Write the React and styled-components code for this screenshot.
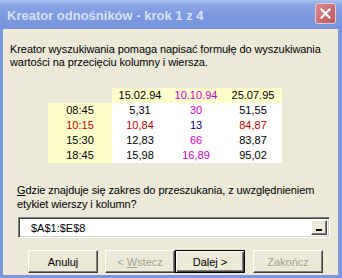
import React from 'react'
import styled, { createGlobalStyle } from 'styled-components'

const GlobalStyle = createGlobalStyle`
    html, body {
        margin: 0;
        padding: 0;
        background: #ece9d8;
    }
    body {
        font-family: "Liberation Sans", Arial, sans-serif;
        font-size: 11px;
    }
`

const rows = [
    { label: '08:45', color: '#000', cells: [['5,31'], ['30', '#cc00cc'], ['51,55']] },
    { label: '10:15', color: '#c00000', cells: [['10,84', '#c00000'], ['13', '#000080'], ['84,87', '#c00000']] },
    { label: '15:30', color: '#000', cells: [['12,83'], ['66', '#cc00cc'], ['83,87']] },
    { label: '18:45', color: '#000', cells: [['15,98'], ['16,89', '#cc00cc'], ['95,02']] },
]

const headers = [['15.02.94'], ['10.10.94', '#cc00cc'], ['25.07.95']]

export default function App() {
    return (
        <Window>
            <GlobalStyle />
            <TitleBar>
                <Title>Kreator odnośników - krok 1 z 4</Title>
                <CloseButton>
                    <svg width="11" height="11" viewBox="0 0 11 11">
                        <path d="M1.5 1.5 L9.5 9.5 M9.5 1.5 L1.5 9.5" stroke="#fff" strokeWidth="2.2" strokeLinecap="square" />
                    </svg>
                </CloseButton>
            </TitleBar>
            <Body>
                <Intro>
                    Kreator wyszukiwania pomaga napisać formułę do wyszukiwania wartości na przecięciu kolumny i wiersza.
                </Intro>
                <Sheet>
                    <Cell $bg="transparent" />
                    {headers.map(([text, color]) => (
                        <Cell key={text} $bg="#ffffcc" $color={color}>{text}</Cell>
                    ))}
                    {rows.map(row => (
                        <React.Fragment key={row.label}>
                            <Cell $bg="#ffffcc" $color={row.color}>{row.label}</Cell>
                            {row.cells.map(([text, color], i) => (
                                <Cell key={i} $bg="#fff" $color={color}>{text}</Cell>
                            ))}
                        </React.Fragment>
                    ))}
                </Sheet>
                <Question>
                    Gdzie znajduje się zakres do przeszukania, z uwzględnieniem etykiet wierszy i kolumn?
                </Question>
                <RangeField>
                    <RangeText>$A$1:$E$8</RangeText>
                    <CollapseButton>
                        <Dash />
                    </CollapseButton>
                </RangeField>
                <ButtonRow>
                    <Button>Anuluj</Button>
                    <Button disabled $ml={7}>&lt;&nbsp;<Key>W</Key>stecz</Button>
                    <Button $default>Dalej &gt;</Button>
                    <Button disabled $ml={8}>Zakończ</Button>
                </ButtonRow>
            </Body>
        </Window>
    )
}

const Window = styled.div`
    width: 342px;
    height: 278px;
    display: flex;
    flex-direction: column;
    background: #7b97de;
    overflow: hidden;
`

const TitleBar = styled.div`
    height: 29px;
    flex: none;
    display: flex;
    align-items: center;
    justify-content: space-between;
    padding: 0 6px 0 7px;
    box-sizing: border-box;
    background: linear-gradient(to bottom, #a9c0f0 0%, #8ba6e6 18%, #7d99df 50%, #7894dc 100%);
`

const Title = styled.div`
    font-family: "Liberation Sans", sans-serif;
    font-weight: bold;
    font-size: 13px;
    color: #d8e2f8;
    padding-top: 1px;
`

const CloseButton = styled.div`
    width: 19px;
    height: 19px;
    border: 1px solid #e9c9cb;
    border-radius: 3px;
    background: linear-gradient(135deg, #d98d91 0%, #c56a6f 60%, #b85b60 100%);
    display: flex;
    align-items: center;
    justify-content: center;
    margin-bottom: 2px;
`

const Body = styled.div`
    flex: 1;
    margin: 0 4px 3px 3px;
    background: #ece9d8;
    padding: 14px 7px 0 7px;
    display: flex;
    flex-direction: column;
    align-items: flex-start;
    color: #000;
`

const Intro = styled.p`
    margin: 0;
    line-height: 13px;
    width: 322px;
    letter-spacing: -0.08px;
`

const Sheet = styled.div`
    display: grid;
    grid-template-columns: 64px 56px 56px 58px;
    grid-auto-rows: 15px;
    margin: 19px 0 0 38px;
`

const Cell = styled.div`
    background: ${p => p.$bg};
    color: ${p => p.$color || '#000'};
    text-align: center;
    line-height: 15px;
`

const Question = styled.p`
    margin: 20px 0 0 7px;
    line-height: 14px;
    width: 310px;
    letter-spacing: -0.08px;

    &::first-letter {
        text-decoration: underline;
    }
`

const RangeField = styled.div`
    margin: 6px 0 0 8px;
    width: 312px;
    height: 21px;
    box-sizing: border-box;
    background: #fff;
    border: 1px solid;
    border-color: #808080 #fff #fff #808080;
    box-shadow: inset 1px 1px 0 #404040, inset -1px -1px 0 #d4d0c8;
    display: flex;
    align-items: center;
    justify-content: space-between;
    padding: 0 2px 0 12px;
`

const RangeText = styled.span`
    padding-top: 1px;
`

const CollapseButton = styled.div`
    width: 16px;
    height: 15px;
    box-sizing: border-box;
    background: #ece9d8;
    border: 1px solid;
    border-color: #fff #404040 #404040 #fff;
    box-shadow: inset -1px -1px 0 #808080;
    display: flex;
    align-items: flex-end;
    justify-content: center;
    padding-bottom: 3px;
`

const Dash = styled.div`
    width: 6px;
    height: 2px;
    background: #000;
`

const ButtonRow = styled.div`
    display: flex;
    margin: 12px 0 0 18px;
`

const Button = styled.div`
    width: 70px;
    height: 23px;
    margin-left: ${p => p.$ml || 0}px;
    box-sizing: border-box;
    display: flex;
    align-items: center;
    justify-content: center;
    background: #ece9d8;
    color: ${p => (p.disabled ? '#a4a29a' : '#000')};
    border: 1px solid;
    border-color: ${p => (p.$default ? '#000' : '#fff #404040 #404040 #fff')};
    box-shadow: ${p => (p.$default
        ? 'inset 1px 1px 0 #fff, inset -1px -1px 0 #404040, inset -2px -2px 0 #808080'
        : 'inset -1px -1px 0 #808080')};
`

const Key = styled.span`
    text-decoration: underline;
`
